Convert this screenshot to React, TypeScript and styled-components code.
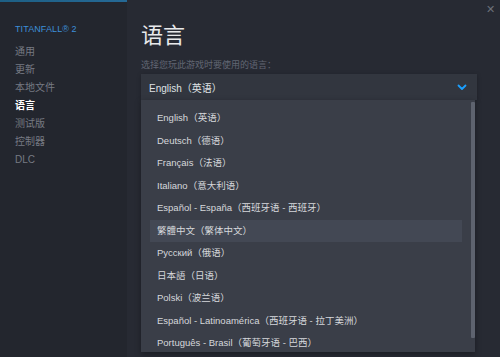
import React from 'react';
import styled, { createGlobalStyle } from 'styled-components';

// --- Settings ---------------------------------------------------------------
const FONT = '"Liberation Sans", "Noto Sans CJK SC", sans-serif';

const GlobalStyle = createGlobalStyle`
  html, body { margin: 0; padding: 0; background: #23262e; }
  body { font-family: ${FONT}; overflow: hidden; }
`;

const NAV_ITEMS = ['通用', '更新', '本地文件', '语言', '测试版', '控制器', 'DLC'];
const ACTIVE_NAV = '语言';

const LANGUAGES = [
  'English（英语）',
  'Deutsch（德语）',
  'Français（法语）',
  'Italiano（意大利语）',
  'Español - España（西班牙语 - 西班牙）',
  '繁體中文（繁体中文）',
  'Русский（俄语）',
  '日本語（日语）',
  'Polski（波兰语）',
  'Español - Latinoamérica（西班牙语 - 拉丁美洲）',
  'Português - Brasil（葡萄牙语 - 巴西）',
];
const HOVERED = '繁體中文（繁体中文）';

// --- Layout -----------------------------------------------------------------
const Window = styled.div`
  position: relative;
  display: flex;
  width: 500px;
  height: 357px;
  overflow: hidden;
  &::before {
    content: '';
    position: absolute;
    left: 0;
    top: 0;
    right: 0;
    height: 2px;
    background: linear-gradient(90deg, #1d5f84, #2a6fa0 40%, #2b4f8e);
  }
`;

const Sidebar = styled.nav`
  width: 127px;
  flex-shrink: 0;
  background: #23262e;
  padding: 24px 0 0 15px;
  box-sizing: border-box;
  display: flex;
  flex-direction: column;
`;

const GameTitle = styled.div`
  color: #3d8fd9;
  font-size: 9px;
  letter-spacing: 0.1px;
  margin-bottom: 9px;
`;

const NavItem = styled.div<{ $active?: boolean }>`
  height: 18px;
  line-height: 18px;
  font-size: 10px;
  color: ${(p) => (p.$active ? '#ffffff' : '#767a83')};
  font-weight: ${(p) => (p.$active ? 700 : 400)};
`;

const Main = styled.main`
  position: relative;
  flex: 1;
  background: #272a33;
  padding: 19px 23px 0 14px;
  display: flex;
  flex-direction: column;
`;

const CloseButton = styled.div`
  position: absolute;
  top: 3px;
  right: 5px;
  color: #6c7079;
  font-size: 11px;
`;

const Title = styled.h1`
  margin: 0;
  font-size: 22px;
  font-weight: 400;
  color: #e8e9eb;
  line-height: 28px;
  font-family: "Noto Sans CJK SC", sans-serif;
`;

const Label = styled.div`
  margin-top: 12px;
  font-size: 9px;
  color: #626774;
  line-height: 12px;
`;

const SelectWrap = styled.div`
  position: relative;
  margin-top: 3px;
`;

const Select = styled.div`
  height: 26px;
  background: #32363f;
  display: flex;
  align-items: center;
  justify-content: space-between;
  padding: 0 10px 0 8px;
  color: #dfe1e4;
  font-size: 10px;
  box-shadow: 0 1px 4px rgba(0, 0, 0, 0.25);
`;

const Menu = styled.div`
  position: absolute;
  top: 26px;
  left: 0;
  right: 2px;
  height: 252px;
  background: #3a3e48;
  display: flex;
  box-shadow: 0 2px 6px rgba(0, 0, 0, 0.35);
`;

const MenuList = styled.div`
  flex: 1;
  padding: 7px 0 0 9px;
`;

const MenuItem = styled.div<{ $hover?: boolean }>`
  height: 22.5px;
  line-height: 22.5px;
  padding-left: 7px;
  margin-right: 9px;
  font-size: 9.5px;
  color: #d6d8dc;
  background: ${(p) => (p.$hover ? '#434854' : 'transparent')};
  white-space: nowrap;
`;

const Scrollbar = styled.div`
  width: 4px;
  margin: 2px 0 14px 0;
  background: #5e636f;
  border-radius: 1px;
`;

function Chevron() {
  return (
    <svg width="10" height="7" viewBox="0 0 10 7">
      <path d="M1.5 1.5 L5 5 L8.5 1.5" fill="none" stroke="#1a9fff" strokeWidth="1.8" strokeLinecap="round" strokeLinejoin="round" />
    </svg>
  );
}

export default function App() {
  return (
    <Window>
      <GlobalStyle />
      <Sidebar>
        <GameTitle>TITANFALL® 2</GameTitle>
        {NAV_ITEMS.map((item) => (
          <NavItem key={item} $active={item === ACTIVE_NAV}>
            {item}
          </NavItem>
        ))}
      </Sidebar>
      <Main>
        <CloseButton>✕</CloseButton>
        <Title>语言</Title>
        <Label>选择您玩此游戏时要使用的语言：</Label>
        <SelectWrap>
          <Select>
            <span>English（英语）</span>
            <Chevron />
          </Select>
          <Menu>
            <MenuList>
              {LANGUAGES.map((lang) => (
                <MenuItem key={lang} $hover={lang === HOVERED}>
                  {lang}
                </MenuItem>
              ))}
            </MenuList>
            <Scrollbar />
          </Menu>
        </SelectWrap>
      </Main>
    </Window>
  );
}
